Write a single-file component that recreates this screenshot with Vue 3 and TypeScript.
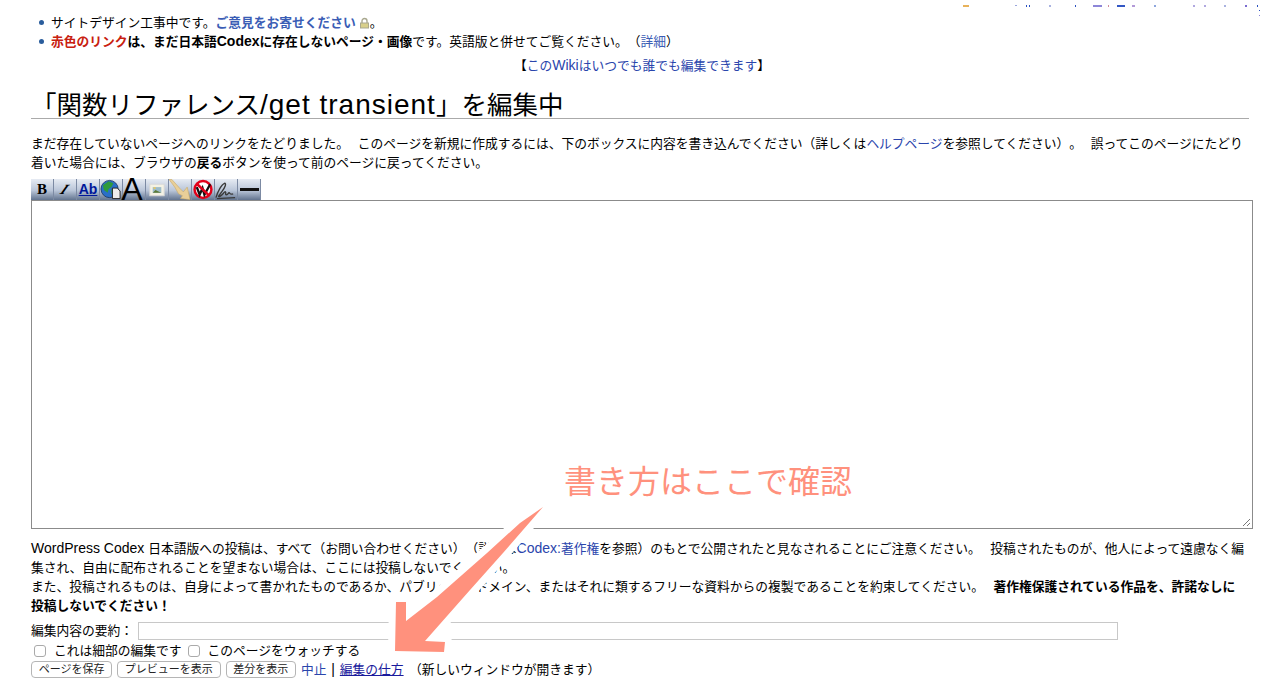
<script setup lang="ts">
const tools = ['bold', 'italic', 'underline', 'globe', 'headline', 'image', 'media', 'nowiki', 'sig', 'hr']

// leftovers of the cropped header line at the very top of the screenshot
const specks = [
  { x: 963, y: 5, w: 6, h: 2, c: '#e8b25a' },
  { x: 1015, y: 5, w: 2, h: 1, c: '#9aa6dd' },
  { x: 1026, y: 5, w: 1, h: 2, c: '#2a50c0' },
  { x: 1029, y: 5, w: 1, h: 2, c: '#2a50c0' },
  { x: 1049, y: 5, w: 2, h: 2, c: '#a9b2e0' },
  { x: 1075, y: 5, w: 1, h: 2, c: '#2a50c0' },
  { x: 1093, y: 5, w: 9, h: 2, c: '#8d86d8' },
  { x: 1108, y: 5, w: 1, h: 2, c: '#d08a9a' },
  { x: 1117, y: 5, w: 8, h: 2, c: '#3357c4' },
  { x: 1132, y: 5, w: 3, h: 2, c: '#b39ad8' },
  { x: 1154, y: 5, w: 2, h: 2, c: '#8da6dd' },
  { x: 1193, y: 5, w: 2, h: 2, c: '#b0a8e0' },
  { x: 1204, y: 5, w: 2, h: 2, c: '#b0a8e0' },
  { x: 1224, y: 5, w: 2, h: 2, c: '#a9b2e0' },
  { x: 1245, y: 5, w: 2, h: 2, c: '#7a6cd0' },
  { x: 1257, y: 5, w: 1, h: 2, c: '#2a50c0' },
  { x: 1259, y: 10, w: 1, h: 1, c: '#2a50c0' },
  { x: 1259, y: 15, w: 1, h: 1, c: '#8d86d8' },
]
</script>

<template>
  <div class="page">
    <ul class="notice">
      <li>サイトデザイン工事中です。<b><a class="link">ご意見をお寄せください</a></b><svg class="lock" width="11" height="12" viewBox="0 0 11 12"><path d="M3 6V4a2.500 2.500 0 0 1 5 0v2" fill="none" stroke="#a9a88f" stroke-width="1.400" /><rect x="1.500" y="6" width="8" height="5" fill="#d8cf8a" stroke="#a9a88f" /></svg>。</li>
      <li><b><span class="red">赤色のリンク</span>は、まだ日本語<span class="lat">Codex</span>に存在しないページ・画像</b>です。英語版と併せてご覧ください。（<a class="link">詳細</a>）</li>
    </ul>
    <p class="center">【<a class="link">この<span class="lat">Wiki</span>はいつでも誰でも編集できます</a>】</p>
    <h1>「関数リファレンス<span class="lat">/get transient</span>」を編集中</h1>
    <p class="intro">まだ存在していないページへのリンクをたどりました。 このページを新規に作成するには、下のボックスに内容を書き込んでください（詳しくは<a class="link">ヘルプページ</a>を参照してください）。 誤ってこのページにたどり着いた場合には、ブラウザの<b>戻る</b>ボタンを使って前のページに戻ってください。</p>
    <div class="toolbar">
      <div v-for="t in tools" :key="t" class="tool" :class="t">
        <span v-if="t === 'bold'">B</span>
        <span v-else-if="t === 'italic'">I</span>
        <span v-else-if="t === 'underline'">Ab</span>
        <span v-else-if="t === 'headline'">A</span>
        <svg v-else-if="t === 'globe'" width="23" height="21" viewBox="0 0 23 21">
          <circle cx="10" cy="10" r="9" fill="#2a6fc8" stroke="#15305a" stroke-width="0.800" />
          <path d="M3 6l6-4 5 2-2 4-3 2-1 4-4-3zM12 10l5 1-2 6-3-2z" fill="#2f9a3c" />
          <path d="M13 9h5l3 3v8h-8z" fill="#ececec" stroke="#222" />
        </svg>
        <svg v-else-if="t === 'image'" width="23" height="21" viewBox="0 0 23 21">
          <rect x="4" y="5" width="15" height="12" fill="#f4f2e4" stroke="#d8d8d8" />
          <rect x="7" y="8" width="9" height="6" fill="#9dbccb" />
          <path d="M7 14l3-3 2 1 4 2z" fill="#5b7a35" />
          <rect x="8" y="8" width="2" height="2" fill="#e8c860" />
        </svg>
        <svg v-else-if="t === 'media'" width="23" height="21" viewBox="0 0 23 21">
          <path d="M0 0h3l8 9 4 4 4-5 3 13-10-1 2-3-4-2-4-7z" fill="#e9cf98" stroke="#c9a865" stroke-width="0.600" />
        </svg>
        <svg v-else-if="t === 'nowiki'" width="23" height="21" viewBox="0 0 23 21">
          <circle cx="11.500" cy="10.500" r="8.800" fill="#fff" stroke="#e2001a" stroke-width="2.600" />
          <path d="M5 8l3 8 3-7 2 7 6-11" fill="none" stroke="#111" stroke-width="2.400" />
          <path d="M5 4.500l13 12.500" stroke="#e2001a" stroke-width="2.600" />
        </svg>
        <svg v-else-if="t === 'sig'" width="23" height="21" viewBox="0 0 23 21">
          <path d="M1 19c2-7 6-14 9-15 2 0 1 4-3 9-2 3-4 5-3 5 3 0 6-6 7-5s-1 3 1 3 2-3 3-2 1 2 4 1M2 20l19-1" fill="none" stroke="#3a3a3a" stroke-width="1.400" />
        </svg>
        <span v-else class="rule"></span>
      </div>
    </div>
    <div class="editor">
      <svg class="grip" width="9" height="9" viewBox="0 0 9 9"><path d="M1 8l7-7M5 8l3-3" stroke="#777" fill="none" /></svg>
    </div>
    <p class="copy"><span class="lat">WordPress Codex </span>日本語版への投稿は、すべて（お問い合わせください）（詳細は<a class="link"><span class="lat">Codex:</span>著作権</a>を参照）のもとで公開されたと見なされることにご注意ください。 投稿されたものが、他人によって遠慮なく編集され、自由に配布されることを望まない場合は、ここには投稿しないでください。<br />また、投稿されるものは、自身によって書かれたものであるか、パブリック・ドメイン、またはそれに類するフリーな資料からの複製であることを約束してください。 <b>著作権保護されている作品を、許諾なしに<br />投稿しないでください！</b></p>
    <div class="summary">
      <label>編集内容の要約：</label>
      <div class="field"></div>
    </div>
    <div class="checks">
      <span class="box"></span><span>これは細部の編集です</span>
      <span class="box second"></span><span>このページをウォッチする</span>
    </div>
    <div class="actions">
      <button>ページを保存</button>
      <button>プレビューを表示</button>
      <button>差分を表示</button>
      <span class="links"><a class="link">中止</a><span class="lat"> | </span><a class="under">編集の仕方</a> （新しいウィンドウが開きます）</span>
    </div>
    <svg class="specks" width="1280" height="20" viewBox="0 0 1280 20">
      <rect v-for="s in specks" :key="s.x" :x="s.x" :y="s.y" :width="s.w" :height="s.h" :fill="s.c" />
    </svg>
    <svg class="arrow" width="180" height="170" viewBox="0 0 180 170">
      <path class="halo" d="M163 12L140 28 107 58 57 102 26 126 26 107 16 107 15 156 64 157 65 147 45 146 90 95 123 58Z" />
      <path class="head" d="M163 12L140 28 107 58 57 102 26 126 26 107 16 107 15 156 64 157 65 147 45 146 90 95 123 58Z" />
    </svg>
    <div class="note">書き方はここで確認</div>
  </div>
</template>

<style scoped>
.page {
  position: relative;
  height: 696px;
  overflow: hidden;
  box-sizing: border-box;
  padding: 13px 27px 0 31px;
  font-family: "Liberation Sans", "Noto Sans CJK JP", sans-serif;
  font-size: 12.750px;
  line-height: 19px;
  text-spacing-trim: space-all;
  color: #000;
  background: #fff;
}
.lat { font-size: 14px; line-height: 0; word-spacing: 0; }
h1 .lat { font-size: 28px; letter-spacing: 1px; }
.link { color: #2a45ac; }
.notice .link { color: #3a5db5; }
.under { text-decoration: underline; color: #1a1a9c; }
.red { color: #c8200f; }
.notice { margin: 0; padding: 0 0 0 20px; list-style: none; }
.notice li { position: relative; }
.notice li::before {
  content: "";
  position: absolute;
  left: -12px;
  top: 7px;
  width: 5px;
  height: 5px;
  border-radius: 50%;
  background: #2a5d9c;
}
.lock { vertical-align: -2px; margin-left: 3px; }
.center { margin: 5px 0 0; text-align: center; }
h1 {
  margin: 17px 4px 0 0;
  border-bottom: 1px solid #aaa;
  font-size: 25.500px;
  line-height: 26px;
  font-weight: 400;
}
.intro { margin: 15px 0 0; word-spacing: 5px; }
.toolbar { display: flex; margin-top: 7px; height: 21px; }
.tool {
  box-sizing: border-box;
  width: 23px;
  height: 21px;
  display: flex;
  align-items: center;
  justify-content: center;
  border-right: 1px solid #7c8aa3;
  background: linear-gradient(#e6ebf3, #b9c5d8 55%, #62748f);
  font-weight: 700;
}
.bold { font-family: "Liberation Serif", serif; font-size: 15px; }
.italic span {
  font-family: "Liberation Serif", serif;
  font-size: 14px;
  transform: skewX(-35deg);
}
.underline { color: #00189a; text-decoration: underline; font-size: 14px; }
.headline { padding-right: 4px; font-size: 32px; line-height: 21px; font-weight: 400; }
.rule { display: block; width: 19px; height: 3px; background: #111; }
.editor {
  position: relative;
  box-sizing: border-box;
  height: 329px;
  width: 1222px;
  border: 1px solid #8b8b8b;
}
.grip { position: absolute; right: 1px; bottom: 1px; }
.copy { margin: 10px 0 0; word-spacing: 6px; }
.summary { display: flex; align-items: center; margin-top: 6px; }
.summary label { width: 107px; }
.field { box-sizing: border-box; width: 980px; height: 18px; border: 1px solid #c8c8c8; }
.checks { display: flex; align-items: center; height: 19px; margin-top: 1px; padding-left: 3px; }
.box { box-sizing: border-box; width: 12px; height: 12px; margin-right: 8px; border: 1px solid #aaa; border-radius: 3px; }
.second { margin-left: 6px; }
.actions { display: flex; align-items: center; gap: 5px; height: 19px; }
.links { word-spacing: 2px; }
.links .lat { word-spacing: 1px; }
button {
  box-sizing: border-box;
  height: 17px;
  padding: 0 6.700px;
  border: 1px solid #b5b5b5;
  border-radius: 4px;
  background: #fff;
  font-family: inherit;
  font-size: 11px;
  line-height: 15px;
  color: #222;
}
.specks { position: absolute; left: 0; top: 0; }
.arrow { position: absolute; left: 380px; top: 495px; }
.halo { fill: #fff; stroke: #fff; stroke-width: 14; stroke-linejoin: round; }
.head { fill: #ff917d; }
.note {
  position: absolute;
  left: 564px;
  top: 462px;
  font-size: 32px;
  line-height: 40px;
  color: #ff917d;
}
</style>
